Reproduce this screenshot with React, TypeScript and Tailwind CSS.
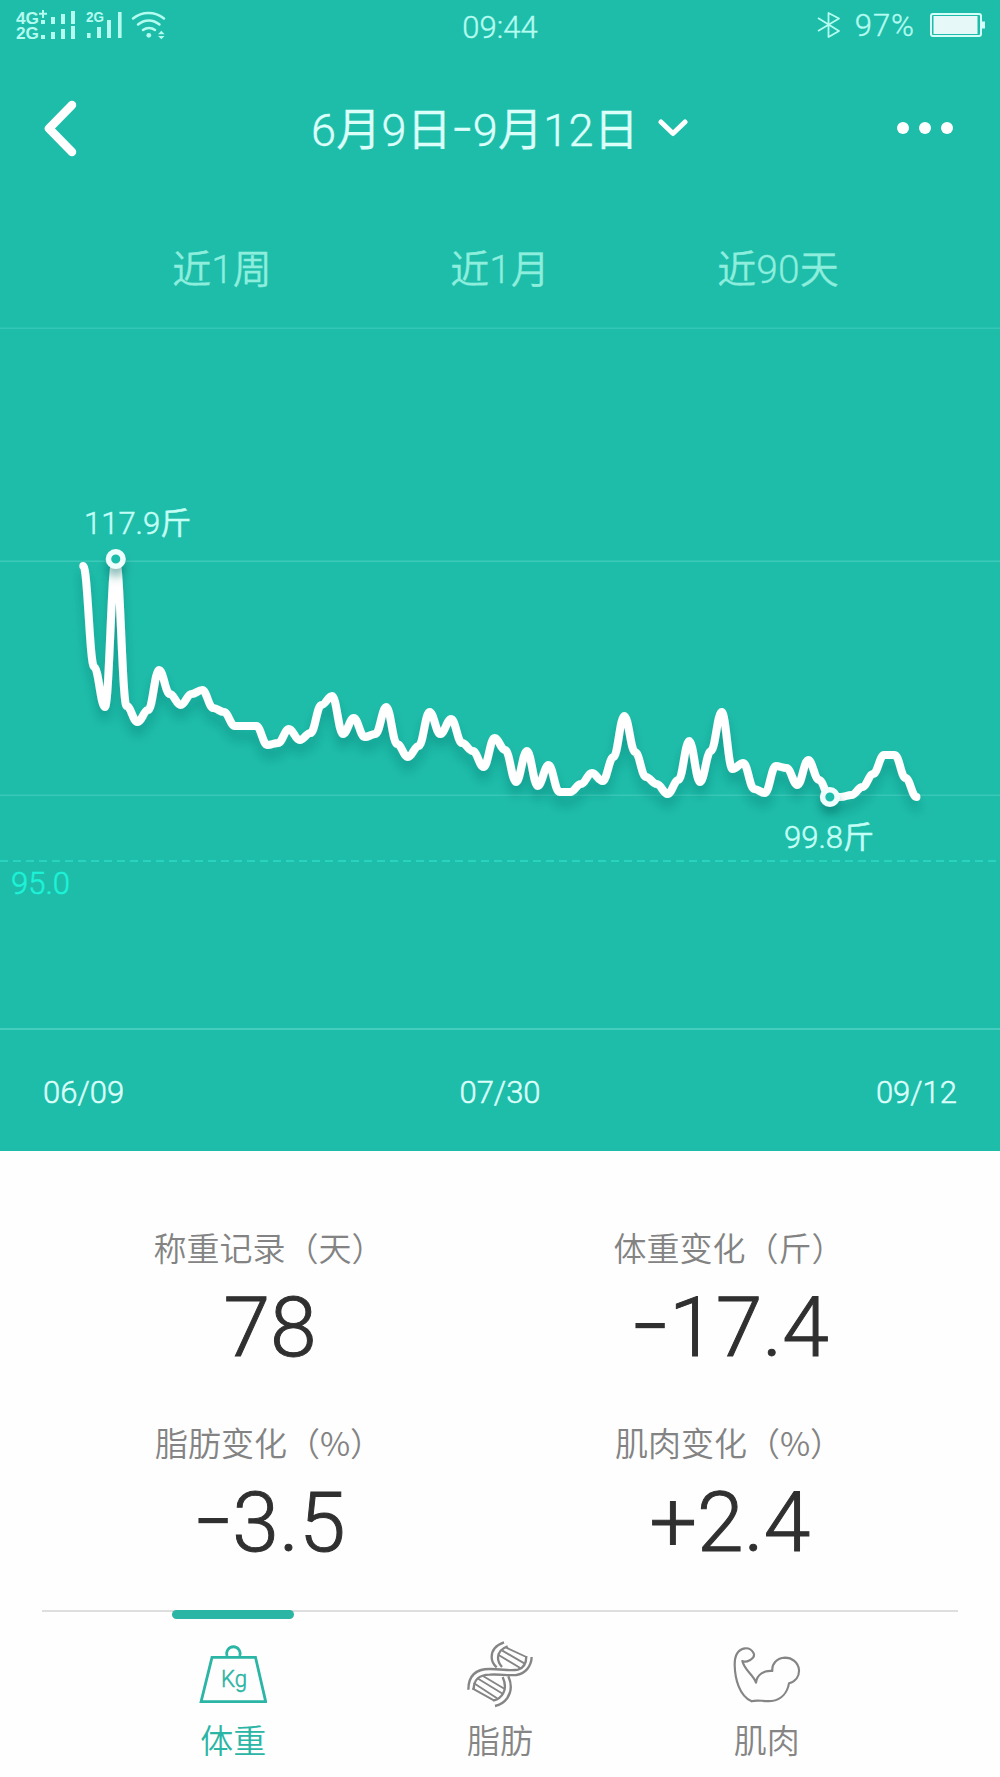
import clsx from "clsx";
import type { ReactNode } from "react";

const FONT = "font-[Roboto,'Noto_Sans_CJK_SC',sans-serif] font-[350]";

// one entry per weigh-in, in chart pixels from the top of the page
const WEIGHTS = [
  566, 667, 707, 559, 706, 722, 710, 670, 694, 705, 694, 690, 708, 712, 726, 726, 726, 745, 743, 729,
  740, 733, 705, 696, 734, 718, 737, 734, 707, 744, 757, 746, 712, 734, 719, 743, 751, 767, 738, 750,
  782, 751, 786, 765, 792, 792, 784, 773, 781, 757, 716, 752, 777, 784, 794, 780, 741, 782, 751, 712,
  769, 763, 789, 793, 766, 768, 785, 760, 780, 797, 797, 795, 787, 774, 755, 755, 778, 797,
];

const START_X = 83.3;
const STEP_X = 10.82;
const EASE = STEP_X * 0.4;
const MAX_INDEX = 3;
const MIN_INDEX = 69;

const xAt = (i: number) => START_X + i * STEP_X;

function buildPath(values: number[]) {
  return values.reduce((d, y, i) => {
    if (i === 0) return `M${xAt(0)} ${y}`;
    return `${d}C${xAt(i - 1) + EASE} ${values[i - 1]} ${xAt(i) - EASE} ${y} ${xAt(i)} ${y}`;
  }, "");
}

const ranges = ["近1周", "近1月", "近90天"];

const stats = [
  { label: "称重记录（天）", sign: "", value: "78" },
  { label: "体重变化（斤）", sign: "-", value: "17.4" },
  { label: "脂肪变化（%）", sign: "-", value: "3.5" },
  { label: "肌肉变化（%）", sign: "+", value: "2.4" },
];

function SignalIcons() {
  return (
    <svg width="155" height="34" viewBox="14 8 155 34" fill="#b4fbf0" className="font-['Liberation_Sans',sans-serif] font-bold">
      <text x="16" y="23.5" fontSize="17" textLength="23" lengthAdjust="spacingAndGlyphs">4G</text>
      <path d="M39 13.8h8M43 10v8" stroke="#b4fbf0" strokeWidth="2" />
      <text x="16" y="39" fontSize="17" textLength="23" lengthAdjust="spacingAndGlyphs">2G</text>
      <path d="M41 20h4v4h-4zM51 17h4v7h-4zM61 14h4v10h-4zM71 11h4v13h-4z" />
      <path d="M41 35h4v4h-4zM51 32h4v7h-4zM61 29h4v10h-4zM71 26h4v13h-4z" />
      <text x="86" y="22" fontSize="14" textLength="18" lengthAdjust="spacingAndGlyphs">2G</text>
      <path d="M87 33h3.6v5H87zM97 27h4v11h-4zM107 20h4v18h-4zM118 12h3.6v26H118z" />
      <g fill="none" stroke="#b4fbf0" strokeWidth="2.5" strokeLinecap="round">
        <path d="M133 18.500c9-7.500 22-7.500 31 0M138 24.500c6.500-5.500 15-5.500 21.500 0M143 30c3.500-2.800 8.500-2.800 12 0" />
      </g>
      <circle cx="148.800" cy="35.300" r="2.400" />
      <path d="M158 34.200l3.300-3.500 3.300 3.500zM158 36l3.300 3.300 3.300-3.300z" />
    </svg>
  );
}

function StatusBar() {
  return (
    <div className="grid h-[50px] grid-cols-3 items-center px-3.5 text-[31px] leading-none text-[#b4fbf0] [-webkit-text-stroke:0.4px]">
      <SignalIcons />
      <span className="pt-1 text-center">09:44</span>
      <div className="flex items-center justify-end">
        <svg width="24" height="28" viewBox="0 0 24 28" fill="none" stroke="#b4fbf0" strokeWidth="1.800" strokeLinejoin="round">
          <path d="M1 7l21 13-10.500 6V2L22 7.500 1 20" />
        </svg>
        <span className="ml-3.5 tracking-[1px]">97%</span>
        <svg width="56" height="26" viewBox="0 0 56 26" className="ml-[15px]">
          <rect x="1" y="2" width="50" height="22" rx="2" fill="none" stroke="#d5fff8" strokeWidth="2" />
          <rect x="3.500" y="4" width="44" height="18" fill="#e6f8f7" />
          <path d="M52 9.500h3v7h-3z" fill="#d5fff8" />
        </svg>
      </div>
    </div>
  );
}

function Header() {
  return (
    <header className="flex h-[155px] items-center justify-between pl-[42px] pr-[46px] text-white">
      <svg width="36" height="58" viewBox="0 0 36 58" fill="none" stroke="currentColor" strokeWidth="8.500" strokeLinecap="round" strokeLinejoin="round">
        <path d="M30 6L7 29.500 30 53" />
      </svg>
      <button className="ml-[25px] flex items-center">
        <span className="whitespace-nowrap pt-[5px] text-[45px] leading-none tracking-[0.3px] text-[#dcfffa] [-webkit-text-stroke:0.4px]">
          6月9日<span className="inline-block -translate-y-[3px] scale-x-110 font-[Inter] font-light">-</span>9月12日
        </span>
        <svg width="30" height="18" viewBox="0 0 30 18" fill="none" stroke="currentColor" strokeWidth="5" strokeLinecap="round" strokeLinejoin="round" className="ml-[19px]">
          <path d="M3 3l12 11.500L27 3" />
        </svg>
      </button>
      <svg width="58" height="14" viewBox="0 0 58 14" fill="currentColor">
        <circle cx="7" cy="7" r="6" />
        <circle cx="29" cy="7" r="6" />
        <circle cx="51" cy="7" r="6" />
      </svg>
    </header>
  );
}

function Marker({ index }: { index: number }) {
  return (
    <circle
      cx={xAt(index)}
      cy={WEIGHTS[index]}
      r="7.300"
      fill="#1ebdaa"
      stroke="#effffd"
      strokeWidth="5.500"
      filter="url(#marker-shadow)"
    />
  );
}

function WeightChart() {
  return (
    <svg width="1000" height="730" viewBox="0 320 1000 730" className="block">
      <defs>
        <filter id="line-shadow" x="-10%" y="-20%" width="120%" height="150%">
          <feDropShadow dx="0" dy="10" stdDeviation="6" floodColor="#0a6f66" floodOpacity="0.4" />
        </filter>
        <filter id="marker-shadow" x="-100%" y="-100%" width="300%" height="350%">
          <feDropShadow dx="0" dy="8" stdDeviation="5" floodColor="#0a6f66" floodOpacity="0.45" />
        </filter>
      </defs>
      <g stroke="#45cdbd" strokeWidth="1.500">
        <path d="M0 328.300H1000" opacity="0.600" />
        <path d="M0 561.300H1000" opacity="0.800" />
        <path d="M0 795.300H1000" opacity="0.700" />
        <path d="M0 1029H1000" strokeWidth="2" />
      </g>
      <path d="M0 861H1000" stroke="#2ad3bf" strokeWidth="1.800" strokeDasharray="8 5" />
      <path
        d={buildPath(WEIGHTS)}
        fill="none"
        stroke="#fff"
        strokeWidth="8"
        strokeLinecap="round"
        strokeLinejoin="round"
        filter="url(#line-shadow)"
      />
      <Marker index={MAX_INDEX} />
      <Marker index={MIN_INDEX} />
      <g fontSize="31" strokeWidth="0.500">
        <text x="84" y="533.500" fill="#c4fff6" stroke="#c4fff6">117.9斤</text>
        <text x="784" y="848" fill="#c4fff6" stroke="#c4fff6">99.8斤</text>
        <text x="11" y="893.500" fill="#1cf3d8" stroke="#1cf3d8">95.0</text>
      </g>
    </svg>
  );
}

function Stat({ label, sign, value }: (typeof stats)[number]) {
  return (
    <div className="flex h-[195px] flex-col items-center">
      <span className="-ml-0.5 font-['Noto_Sans_CJK_SC',sans-serif] text-[33px] leading-[46px] text-[#838383]">{label}</span>
      <span className="mt-3.5 flex text-[84px] leading-[88px] text-[#303030] [-webkit-text-stroke:1px]">
        {sign === "-" ? (
          <span className="-translate-y-1.5 scale-x-115 font-[Inter] font-light [-webkit-text-stroke:0px]">-</span>
        ) : (
          sign
        )}
        {value}
      </span>
    </div>
  );
}

function ScaleIcon() {
  return (
    <svg width="68" height="62" viewBox="199 1643 68 62" fill="none" stroke="currentColor" strokeWidth="2.800">
      <path d="M212 1657.300h43.500l10.200 44.400h-64.600zM227.200 1656a6.700 6.700 0 1 1 12.400 0" />
      <text x="221" y="1687" fontSize="23" fill="currentColor" strokeWidth="0.500" textLength="26" lengthAdjust="spacingAndGlyphs" className="font-[350]">Kg</text>
    </svg>
  );
}

function DnaIcon() {
  return (
    <svg width="68" height="68" viewBox="79 61 204 204" fill="none" stroke="currentColor" strokeWidth="7">
      <path d="M86 210C86 165 110 148 150 148C190 148 212 155 235 150C253 145 260 127 260 109" />
      <path d="M102 210C102 178 118 166 150 165C180 163 205 168 230 166C256 163 275 140 276 112" />
      <path d="M193 68C170 76 156 90 156 112C156 125 162 135 171 143M204 80C184 87 175 100 175 115C175 126 180 134 187 142" />
      <path d="M189 172C197 190 199 205 191 220C185 232 176 239 161 243M206 170C216 192 216 215 203 235C193 249 181 256 166 259" />
      <path d="M200 84l60 28M188 93l66 38M177 106l66 40M130 169l64 38M113 176l76 46M102 190l70 46M98 206l66 37" strokeWidth="5.500" />
    </svg>
  );
}

function ArmIcon() {
  return (
    <svg width="68" height="57" viewBox="69 76 204 171" fill="none" stroke="currentColor" strokeWidth="6.500" strokeLinejoin="round">
      <path d="M97 121C108 127 116 120 122 117C130 112 134 105 131 98C126 88 116 82 105 83C84 86 74 105 74 132C75 175 88 226 125 242C140 236 160 243 185 241C215 237 232 215 237 188C258 182 268 166 267 148C265 124 245 111 225 111C200 112 185 130 187 151C163 149 141 160 138 186C130 162 104 150 97 121Z" />
    </svg>
  );
}

function NavTab({ label, active, children }: { label: string; active?: boolean; children: ReactNode }) {
  return (
    <button className={clsx("-mt-0.5 flex flex-col items-center", active ? "text-[#2ab5a5]" : "text-[#858585]")}>
      <span className={clsx("h-[9px] w-[122px] rounded-full", active && "bg-[#2ab5a5]")} />
      <span className="mt-6 flex h-[62px] items-center">{children}</span>
      <span className="mt-[13px] text-[33px] leading-[48px]">{label}</span>
    </button>
  );
}

export default function App() {
  return (
    <div className={clsx("flex h-[1777px] w-[1000px] flex-col overflow-hidden bg-[#fefefe]", FONT)}>
      <section className="h-[1151px] bg-[#1ebdaa]">
        <StatusBar />
        <Header />
        <div className="grid h-[115px] grid-cols-3 px-[83px] pt-10 text-center text-[39px] leading-[50px] text-[#8eeedd] [-webkit-text-stroke:0.3px]">
          {ranges.map((range) => (
            <span key={range}>{range}</span>
          ))}
        </div>
        <WeightChart />
        <div className="grid grid-cols-3 px-[43px] pt-[25px] text-[31px] leading-9 text-[#dcfffa] [-webkit-text-stroke:0.5px]">
          <span>06/09</span>
          <span className="text-center">07/30</span>
          <span className="text-right">09/12</span>
        </div>
      </section>

      <section className="grid h-[459px] grid-cols-2 content-start px-10 pt-[73px]">
        {stats.map((stat) => (
          <Stat key={stat.label} {...stat} />
        ))}
      </section>

      <nav className="mx-[42px] grid grid-cols-3 border-t-2 border-[#dedede] px-[58px]">
        <NavTab label="体重" active>
          <ScaleIcon />
        </NavTab>
        <NavTab label="脂肪">
          <DnaIcon />
        </NavTab>
        <NavTab label="肌肉">
          <ArmIcon />
        </NavTab>
      </nav>
    </div>
  );
}
